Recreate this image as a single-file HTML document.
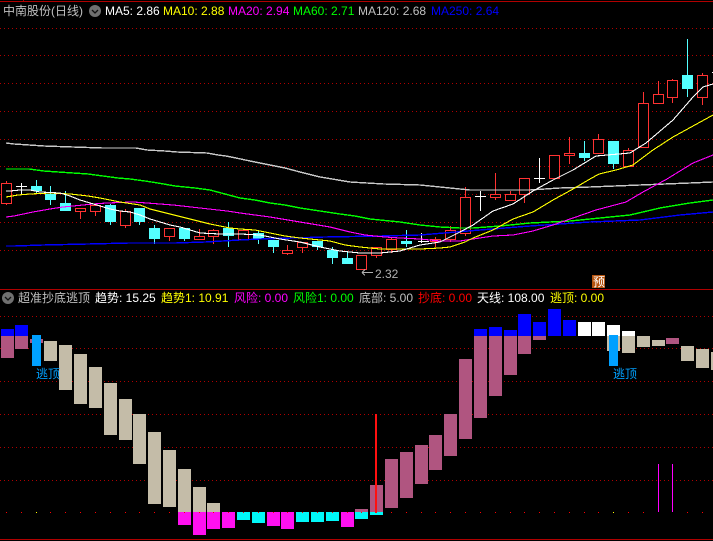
<!DOCTYPE html>
<html lang="zh"><head><meta charset="utf-8"><title>中南股份</title>
<style>
html,body{margin:0;padding:0;background:#000;width:713px;height:541px;overflow:hidden}
svg{display:block}
text{font-family:"Liberation Sans","WenQuanYi Zen Hei","Noto Sans CJK SC",sans-serif;font-size:12px}
.c{shape-rendering:crispEdges}
</style></head><body>
<svg width="713" height="541" viewBox="0 0 713 541" xmlns="http://www.w3.org/2000/svg">
<rect width="713" height="541" fill="#000"/>
<g class="c">
<path d="M0 1.5H713M0 289.5H713M0 539.5H713" stroke="#b00000" fill="none"/>
<path d="M23.5 0V1" stroke="#b00000"/>
<path d="M0 28.5H713M0 55.5H713M0 83.5H713M0 111.5H713M0 139.5H713M0 166.5H713M0 194.5H713M0 222.5H713M0 250.5H713M0 316.5H713M0 348.5H713M0 381.5H713M0 414.5H713M0 447.5H713M0 480.5H713" stroke="#b00000" stroke-dasharray="1 3" fill="none"/>
<!-- wicks -->
<path fill="none" stroke="#ff3232" d="M6.5 181V205M80.5 212V219M95.5 212V216M125.5 209V228M169.5 237V241M199.5 229V236M213.5 229V244M287.5 245V255M302.5 248V253M376.5 247V258M391.5 237V253M435.5 237V247M450.5 226V242M465.5 187V236M495.5 173V200M510.5 191V201M524.5 195V203M569.5 137V164M598.5 134V139M628.5 148V167M643.5 92V103M658.5 81V94M672.5 79V103M702.5 73V105"/>
<path fill="none" stroke="#54ffff" d="M36.5 180V193M50.5 186V205M65.5 191V203M110.5 204V225M139.5 222V225M154.5 225V244M184.5 239V241M228.5 222V247M258.5 230V244M273.5 247V253M317.5 241V250M332.5 247V264M347.5 252V258M406.5 230V247M584.5 141V161M613.5 164V169M687.5 39V97"/>
<path fill="none" stroke="#fff" d="M21.5 183V194M16 186.5H27M421.5 233V243M418 241.5H429M480.5 191V211M475 196.5H486M539.5 158V183M534 178.5H545M712 72.5H713"/>
<!-- red bodies -->
<g fill="#000" stroke="#ff3232">
<rect x="1.5" y="183.5" width="10" height="20"/><rect x="75.5" y="208.5" width="10" height="3"/><rect x="90.5" y="205.5" width="10" height="6"/><rect x="120.5" y="211.5" width="10" height="14"/><rect x="164.5" y="228.5" width="10" height="8"/><rect x="194.5" y="236.5" width="10" height="3"/><rect x="208.5" y="230.5" width="10" height="6"/><rect x="238.5" y="230.5" width="10" height="9"/><rect x="282.5" y="250.5" width="10" height="3"/><rect x="297.5" y="242.5" width="10" height="5"/><rect x="356.5" y="255.5" width="10" height="14"/><rect x="371.5" y="247.5" width="10" height="8"/><rect x="386.5" y="239.5" width="10" height="10"/><rect x="430.5" y="239.5" width="10" height="2"/><rect x="445.5" y="230.5" width="10" height="9"/><rect x="460.5" y="197.5" width="10" height="36"/><rect x="490.5" y="194.5" width="10" height="3"/><rect x="505.5" y="194.5" width="10" height="6"/><rect x="519.5" y="178.5" width="10" height="16"/><rect x="549.5" y="155.5" width="10" height="23"/><rect x="564.5" y="153.5" width="10" height="2"/><rect x="593.5" y="139.5" width="10" height="14"/><rect x="623.5" y="150.5" width="10" height="16"/><rect x="638.5" y="103.5" width="10" height="44"/><rect x="653.5" y="94.5" width="10" height="9"/><rect x="667.5" y="80.5" width="10" height="17"/><rect x="697.5" y="75.5" width="10" height="22"/>
</g>
<!-- cyan bodies -->
<path fill="#54ffff" d="M31 186h11v5h-11zM45 194h11v6h-11zM60 203h11v8h-11zM105 205h11v17h-11zM134 208h11v14h-11zM149 228h11v11h-11zM179 228h11v11h-11zM223 228h11v8h-11zM253 233h11v6h-11zM268 240h11v7h-11zM312 241h11v6h-11zM327 250h11v8h-11zM342 258h11v6h-11zM401 241h11v3h-11zM579 153h11v5h-11zM608 141h11v23h-11zM682 75h11v14h-11z"/>
</g>
<!-- MA lines -->
<g fill="none" class="c" stroke-width="1.4">
<polyline stroke="#c8c8c8" points="6,143 14,144 29,145 44,146 73,147 103,148 136,148 147,150 165,151 177,152 207,153 218,155 226,156 236,158 250,161 265,164 285,168 300,172 320,177 350,182 384,184 420,185 440,187 470,190 530,190 560,188 590,187 640,185 690,183 713,182"/>
<polyline stroke="#00ff00" points="6,169 29,169 44,171 58,172 73,173 88,174 103,176 118,178 130,179 145,181 158,183 175,186 195,188 210,190 225,194 240,198 255,200 270,203 285,205 300,208 320,211 340,214 355,216 370,219 380,220 400,222 420,225 440,227 460,228 473,228 500,226 530,223 570,221 600,218 630,215 660,208 690,203 713,200"/>
<polyline stroke="#0000ff" points="6,246 14,246 43,245 88,244 130,243 175,243 205,242 240,240 260,239 325,237 380,236 420,235 480,230 530,226 590,222 640,220 680,215 713,212"/>
<polyline stroke="#ff00ff" stroke-width="1.1" points="6,217 14,216 33,212 50,209 63,207 73,206 93,204 107,203 133,202 147,203 173,205 200,208 227,211 240,213 270,217 300,222 330,227 350,232 365,235 385,237 400,238 420,239 440,241 460,241 473,239 493,236 513,235 533,231 553,225 573,218 596,210 626,202 643,192 667,179 693,163 713,155"/>
<polyline stroke="#ffff00" stroke-width="1.1" points="6,197 18,195 30,194 50,193 70,194 88,196 100,198 120,202 140,205 150,209 170,214 190,219 210,224 230,228 240,229 255,230 270,233 285,236 300,238 320,240 330,241 345,245 360,247 380,249 420,249 440,248 450,247 465,242 473,238 493,230 513,219 533,212 553,200 573,189 590,179 599,174 616,170 633,165 653,150 673,137 693,126 713,115"/>
<polyline stroke="#ffffff" stroke-width="1.1" points="6,191 10,191 20,190 30,190 40,192 60,193 70,196 80,200 90,203 100,206 110,209 120,211 130,212 140,215 150,219 160,222 170,225 180,227 190,230 200,233 220,234 240,234 260,235 280,239 300,242 320,247 340,251 360,253 380,253 400,251 420,245 440,242 460,232 473,225 493,211 513,204 533,191 553,180 573,170 596,156 630,153 646,143 673,120 693,97 703,87 713,84"/>
</g>
<g class="c">
<!-- lower bars -->
<path fill="#b05580" d="M1 336h13v22h-13zM15 336h13v13h-13zM30 339h13v4h-13zM355 509h13v3h-13zM370 485h13v27h-13zM385 459h13v49h-13zM400 452h13v46h-13zM415 445h13v39h-13zM429 435h13v35h-13zM444 414h13v42h-13zM459 359h13v80h-13zM474 336h13v82h-13zM489 336h13v60h-13zM504 336h13v39h-13zM518 336h13v18h-13zM533 336h13v4h-13zM666 338h13v6h-13z"/>
<path fill="#c4bca8" d="M44 341h13v20h-13zM59 345h13v45h-13zM74 354h13v50h-13zM89 367h13v41h-13zM104 383h13v52h-13zM119 399h13v41h-13zM133 414h13v50h-13zM148 432h13v72h-13zM163 450h13v57h-13zM178 469h13v43h-13zM193 487h13v25h-13zM207 503h13v9h-13zM607 336h13v15h-13zM622 336h13v17h-13zM637 336h13v11h-13zM652 340h13v6h-13zM681 346h13v15h-13zM696 349h13v19h-13zM711 352h2v18h-2z"/>
<path fill="#0000ff" d="M1 329h13v7h-13zM15 325h13v11h-13zM474 329h13v7h-13zM489 327h13v9h-13zM504 330h13v6h-13zM518 314h13v22h-13zM533 322h13v14h-13zM548 309h13v27h-13zM563 320h13v16h-13z"/>
<path fill="#ffffff" d="M578 322h13v14h-13zM592 322h13v14h-13zM607 325h13v11h-13zM622 331h13v5h-13z"/>
<path fill="#00a0ff" d="M32 335h9v31h-9zM609 335h9v31h-9z"/>
<path fill="#ff10f0" d="M178 512h13v13h-13zM193 512h13v23h-13zM207 512h13v17h-13zM222 512h13v16h-13zM267 512h13v14h-13zM281 512h13v17h-13zM341 512h13v15h-13z"/>
<path fill="#00f8f8" d="M237 512h13v8h-13zM252 512h13v11h-13zM296 512h13v10h-13zM311 512h13v10h-13zM326 512h13v9h-13zM355 512h13v7h-13zM370 512h13v3h-13z"/>
<rect x="375" y="414" width="2" height="99" fill="#ff1010"/>
<path stroke="#ff00ff" fill="none" d="M658.5 464V512M672.5 464V512"/>
<path stroke="#ff0000" fill="none" d="M6 512.5h1M21 512.5h1M50 512.5h1M65 512.5h1M80 512.5h1M95 512.5h1M110 512.5h1M125 512.5h1M139 512.5h1M154 512.5h1M169 512.5h1M184 512.5h1M199 512.5h1M213 512.5h1M228 512.5h1M243 512.5h1M258 512.5h1M273 512.5h1M287 512.5h1M302 512.5h1M317 512.5h1M332 512.5h1M347 512.5h1M361 512.5h1M391 512.5h1M406 512.5h1M421 512.5h1M435 512.5h1M450 512.5h1M465 512.5h1M480 512.5h1M495 512.5h1M510 512.5h1M524 512.5h1M539 512.5h1M554 512.5h1M569 512.5h1M584 512.5h1M598 512.5h1M628 512.5h1M643 512.5h1M687 512.5h1M702 512.5h1"/>
<path stroke="#ffff00" fill="none" d="M36 512.5h1M613 512.5h1"/>
<rect x="592" y="275" width="13" height="13" fill="#b5530f"/>
<path stroke="#b0b0b0" fill="none" d="M362 272.5H373M362 272.5L365 269.5M362 272.5L365 275.5"/>
</g>
<!-- header -->
<text x="3" y="15" fill="#c0c0c0">中南股份(日线)</text>
<circle cx="95" cy="11" r="6" fill="#707070"/>
<path d="M92 10l3 3 3-3" stroke="#111" stroke-width="1.3" fill="none"/>
<text x="105" y="15" fill="#fff">MA5: 2.86</text>
<text x="163" y="15" fill="#ff0">MA10: 2.88</text>
<text x="228" y="15" fill="#f0f">MA20: 2.94</text>
<text x="293" y="15" fill="#0f0">MA60: 2.71</text>
<text x="358" y="15" fill="#c0c0c0">MA120: 2.68</text>
<text x="431" y="15" fill="#0000ff">MA250: 2.64</text>
<text x="375" y="278" fill="#b0b0b0">2.32</text>
<text x="593" y="286" fill="#fff">预</text>
<!-- lower legend -->
<circle cx="8" cy="298" r="6" fill="#707070"/>
<path d="M5 297l3 3 3-3" stroke="#111" stroke-width="1.3" fill="none"/>
<text x="18" y="302" fill="#c0c0c0">超准抄底逃顶</text>
<text x="95" y="302" fill="#fff">趋势: 15.25</text>
<text x="161" y="302" fill="#ff0">趋势1: 10.91</text>
<text x="234" y="302" fill="#f0f">风险: 0.00</text>
<text x="293" y="302" fill="#0f0">风险1: 0.00</text>
<text x="359" y="302" fill="#c0c0c0">底部: 5.00</text>
<text x="418" y="302" fill="#f00">抄底: 0.00</text>
<text x="477" y="302" fill="#fff">天线: 108.00</text>
<text x="550" y="302" fill="#ff0">逃顶: 0.00</text>
<text x="36" y="378" fill="#00a0ff">逃顶</text>
<text x="613" y="378" fill="#00a0ff">逃顶</text>
</svg>
</body></html>
